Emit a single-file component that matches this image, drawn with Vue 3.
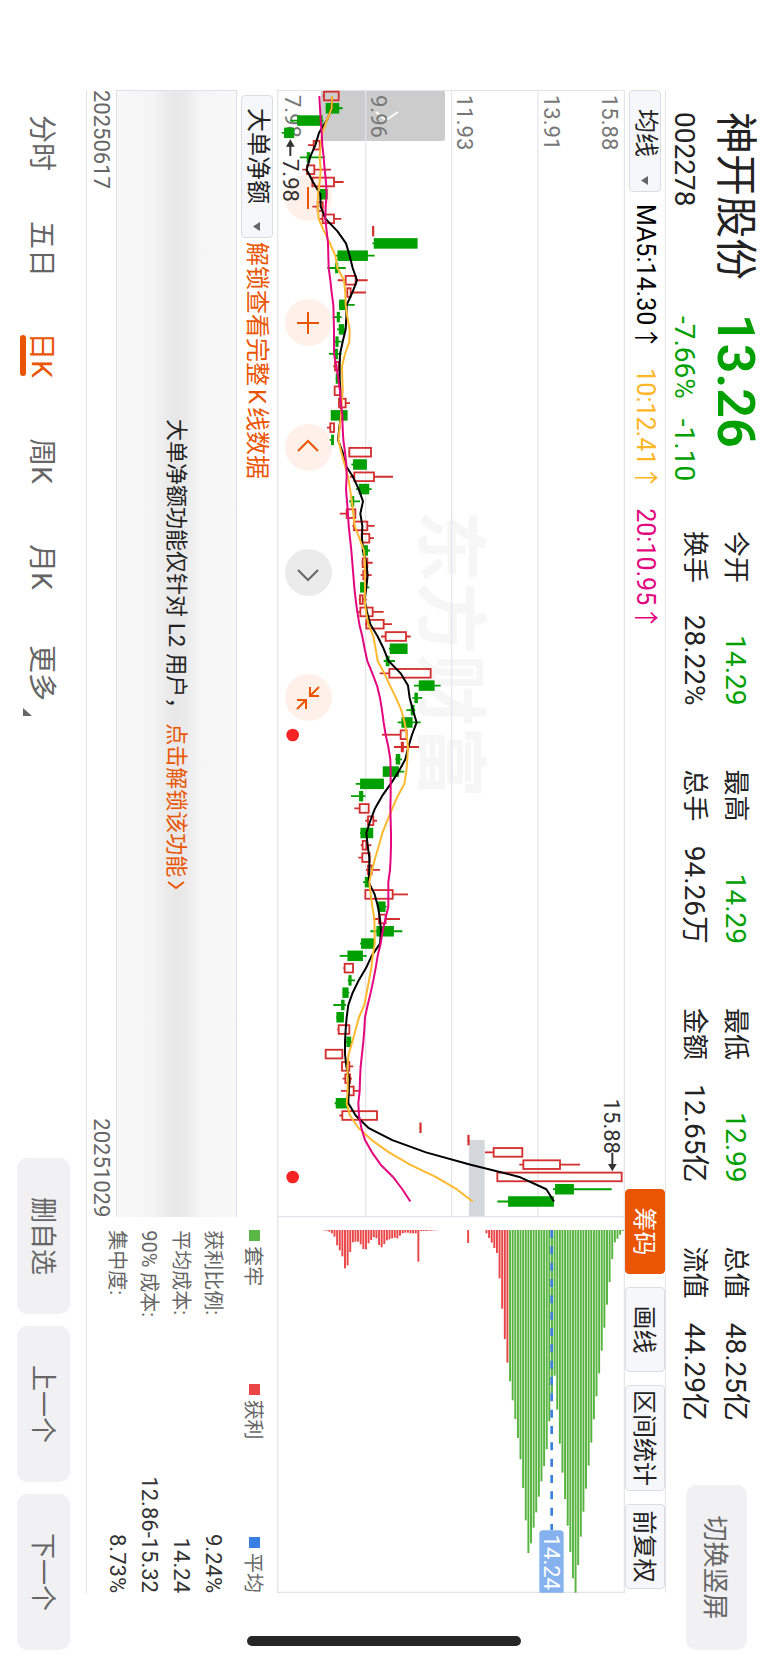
<script setup>
import { ref } from 'vue'

// Prices are kept in chart units (three per pixel) measured upwards from the plot origin.
const ORIGIN = 1185
const STEP = 36.85
const FIRST = 18
const y = (level) => ORIGIN - level
const x = (index) => FIRST + STEP * index

// [direction, low, high, body low, body high]
const candles = [
  ['r', 278, 328, 282, 326], ['g', 287, 338, 290, 325], ['g', 180, 280, 204, 275], ['g', 155, 190, 165, 190],
  ['r', 234, 270, 251, 269], ['g', 210, 285, 233, 238], ['r', 217, 303, 231, 253], ['r', 247, 341, 247, 312],
  ['g', 272, 290, 272, 290], ['r', 247, 280, 263, 278], ['r', 268, 334, 278, 312], ['r', 427, 432, 429, 430],
  ['g', 427, 560, 434, 560], ['g', 316, 434, 325, 411], ['g', 292, 347, 318, 322], ['r', 323, 413, 347, 377],
  ['r', 350, 408, 352, 362], ['g', 327, 374, 330, 345], ['g', 308, 335, 323, 327], ['g', 321, 347, 329, 340],
  ['g', 313, 335, 319, 323], ['g', 297, 335, 317, 321], ['r', 310, 328, 315, 326], ['g', 317, 330, 320, 323],
  ['r', 312, 333, 314, 331], ['r', 324, 360, 327, 347], ['g', 303, 351, 305, 350], ['r', 291, 314, 301, 312],
  ['g', 299, 312, 306, 309], ['r', 356, 424, 358, 423], ['g', 364, 408, 372, 408], ['r', 360, 489, 373, 432],
  ['g', 378, 425, 389, 415], ['g', 357, 390, 365, 370], ['r', 329, 377, 350, 376], ['r', 367, 434, 372, 412],
  ['r', 393, 432, 395, 418], ['g', 395, 420, 400, 411], ['r', 395, 428, 398, 412], ['r', 392, 425, 400, 410],
  ['g', 390, 418, 393, 403], ['r', 386, 410, 390, 398], ['r', 380, 461, 391, 428], ['r', 405, 486, 409, 461],
  ['r', 453, 542, 467, 528], ['g', 477, 530, 482, 530], ['g', 461, 495, 470, 476], ['r', 449, 603, 478, 602],
  ['g', 552, 632, 569, 611], ['g', 547, 577, 556, 561], ['g', 529, 556, 545, 551], ['g', 503, 572, 517, 545],
  ['r', 456, 530, 512, 530], ['r', 492, 567, 515, 519], ['g', 496, 516, 500, 508], ['g', 459, 523, 461, 504],
  ['g', 377, 461, 393, 459], ['g', 363, 406, 390, 397], ['r', 373, 417, 389, 416], ['r', 406, 441, 414, 430],
  ['g', 390, 428, 394, 427], ['r', 392, 424, 398, 409], ['r', 385, 420, 397, 419], ['r', 408, 450, 414, 425],
  ['g', 399, 420, 407, 416], ['r', 406, 534, 406, 488], ['g', 440, 470, 446, 464], ['r', 430, 510, 447, 467],
  ['g', 421, 517, 442, 489], ['g', 390, 430, 396, 430], ['g', 329, 410, 355, 396], ['r', 340, 370, 344, 369],
  ['g', 353, 375, 358, 362], ['g', 338, 358, 340, 353], ['g', 310, 348, 336, 341], ['g', 319, 342, 322, 339],
  ['r', 322, 359, 326, 358], ['g', 348, 369, 352, 361], ['r', 286, 338, 287, 337], ['r', 334, 370, 336, 358],
  ['r', 338, 366, 346, 360], ['r', 333, 388, 357, 371], ['g', 314, 355, 320, 352], ['r', 328, 442, 337, 441],
  ['r', 569, 574, 571, 572], ['r', 713, 718, 715, 716], ['r', 765, 877, 791, 877], ['r', 868, 1050, 880, 990],
  ['r', 802, 1176, 802, 1175], ['g', 969, 1145, 978, 1029], ['g', 802, 972, 837, 969],
]

const ma5 = [306, 305, 290, 267, 256, 240, 230, 249, 271, 272, 287, 322, 348, 359, 368, 381, 367, 350, 349, 347, 338, 330, 329, 329, 331, 333, 333, 328, 324, 338, 345, 369, 386, 399, 391, 397, 396, 399, 409, 413, 409, 404, 411, 421, 443, 461, 476, 512, 534, 539, 549, 560, 546, 535, 526, 506, 482, 456, 435, 421, 409, 413, 418, 418, 416, 434, 444, 450, 453, 450, 425, 408, 386, 368, 355, 350, 347, 345, 345, 349, 358, 356, 355, 377, 415, 487, 588, 722, 868, 949, 972]
const ma10 = [306, 305, 290, 277, 272, 269, 272, 269, 264, 263, 266, 282, 300, 316, 322, 342, 346, 347, 352, 359, 358, 345, 336, 337, 338, 335, 333, 329, 325, 334, 344, 354, 360, 366, 370, 374, 388, 402, 405, 404, 405, 404, 408, 415, 430, 437, 443, 463, 480, 498, 514, 524, 530, 534, 532, 529, 523, 503, 487, 472, 457, 447, 436, 426, 418, 422, 427, 433, 434, 434, 428, 424, 417, 410, 403, 387, 377, 367, 356, 352, 353, 353, 350, 360, 385, 425, 477, 540, 617, 680, 728]
const ma20 = [268, 270, 272, 275, 277, 281, 284, 288, 290, 287, 286, 290, 294, 295, 296, 301, 305, 310, 311, 312, 312, 312, 319, 325, 330, 333, 337, 338, 340, 345, 349, 350, 348, 351, 354, 356, 360, 364, 367, 370, 373, 377, 382, 388, 397, 404, 412, 427, 441, 450, 456, 461, 467, 475, 481, 482, 482, 482, 481, 482, 483, 483, 482, 480, 475, 475, 475, 466, 458, 452, 443, 437, 430, 422, 413, 405, 403, 400, 396, 392, 390, 389, 385, 387, 394, 405, 426, 452, 489, 517, 541]
const line = (levels) => levels.map((level, i) => `${x(i).toFixed(1)},${y(level)}`).join(' ')

// Chip distribution, from the lowest price upwards; bars from index 71 on are above the close.
const chips = [
  1, 2, 5, 10, 20, 46, 61, 79, 115, 106, 66, 37, 35, 35, 43, 57, 58, 40, 30, 21, 25, 45, 52, 42, 31, 28, 25, 23, 25, 17, 10, 8, 8, 10, 10, 10, 95, 3, 3, 3, 2, 2, 1, 1,
  0, 0, 0, 0, 0, 0, 0, 0, 0, 0, 0, 39, 0, 0, 0, 0, 0, 0,
  10, 24, 38, 54, 69, 145, 236, 327, 398,
  454, 511, 567, 624, 688, 774, 871, 969, 940, 893, 847, 800, 754, 708, 658, 574, 490, 437, 539, 641, 728, 807, 887, 966, 1045, 1088, 1005, 920, 845, 776, 707, 638, 568, 499, 430, 362, 293, 224, 156, 87, 37, 26, 14, 3,
]

const quotes = [
  ['今开', '14.29', true, '换手', '28.22%'],
  ['最高', '14.29', true, '总手', '94.26万'],
  ['最低', '12.99', true, '金额', '12.65亿'],
  ['总值', '48.25亿', false, '流值', '44.29亿'],
]
const tools = ['筹码', '画线', '区间统计', '前复权']
const activeTool = ref('筹码')
const tabs = ['分时', '五日', '日K', '周K', '月K', '更多']
const activeTab = ref('日K')
const actions = ['删自选', '上一个', '下一个']
const costs = [
  ['获利比例:', '9.24%'],
  ['平均成本:', '14.24'],
  ['90% 成本:', '12.86-15.32'],
  ['集中度:', '8.73%'],
]
const controls = [
  { name: '缩小', path: 'M1 12H23' },
  { name: '放大', path: 'M1 12H23M12 1V23' },
  { name: '向前', path: 'M15 2L5 12L15 22' },
  { name: '向后', path: 'M9 2L19 12L9 22', muted: true },
  { name: '收起', path: 'M1 1L10 10M1 10H10V1M23 23L14 14M14 23V14H23' },
]
</script>

<template>
  <div class="stage">
    <div class="screen">
      <header class="head">
        <div class="stock">
          <h1 class="name">神开股份</h1>
          <strong class="price">13.26</strong>
          <span class="code">002278</span>
          <span class="change"><span>-7.66%</span><span>-1.10</span></span>
        </div>
        <dl class="quotes">
          <div v-for="q in quotes" :key="q[0]" class="quote">
            <dt>{{ q[0] }}</dt>
            <dd :class="{ down: q[2] }">{{ q[1] }}</dd>
            <dt>{{ q[3] }}</dt>
            <dd>{{ q[4] }}</dd>
          </div>
        </dl>
        <button class="soft rotate" type="button">切换竖屏</button>
      </header>

      <div class="content">
        <div class="toolbar">
          <label class="picker main-picker">
            <select aria-label="主图指标"><option>均线</option></select>
            <svg class="caret" viewBox="0 0 9 7"><path d="M0 0H9L4.5 7Z" /></svg>
          </label>
          <div class="averages">
            <span class="avg">MA5:14.30<i>↑</i></span>
            <span class="avg amber">10:12.41<i>↑</i></span>
            <span class="avg pink">20:10.95<i>↑</i></span>
          </div>
          <div class="tools">
            <button
              v-for="t in tools" :key="t" type="button" class="tool"
              :class="{ on: t === activeTool }" @click="activeTool = t"
            >{{ t }}</button>
          </div>
        </div>

        <div class="plot">
          <button class="handle" type="button" aria-label="展开">
            <svg viewBox="0 0 10 24"><path d="M1 1L9 13L1 23" /></svg>
          </button>
          <div class="controls">
            <button
              v-for="c in controls" :key="c.name" type="button" class="round"
              :class="{ muted: c.muted }" :aria-label="c.name"
            >
              <svg viewBox="0 0 24 24"><path :d="c.path" /></svg>
            </button>
          </div>
          <svg class="chart" viewBox="0 0 4509 1044">
            <text class="mark" x="1260" y="600">东方财富</text>
            <rect class="gap" x="3150" y="421" width="228" height="47" />
            <g class="grid">
              <path d="M0 261H3380M0 520H3380M0 778H3380" />
              <path d="M0 2H4507M1.5 0V1044M3380 0V1044M4507 0V1044M0 1042H4507" />
            </g>
            <g class="axis">
              <text x="15" y="68">15.88</text>
              <text x="15" y="242">13.91</text>
              <text x="15" y="503">11.93</text>
              <text x="15" y="763">9.96</text>
              <text x="15" y="1021">7.98</text>
            </g>
            <g v-for="(c, i) in candles" :key="i" :class="c[0] === 'r' ? 'up' : 'fall'">
              <path :d="`M${x(i)} ${y(c[1])}V${y(c[3])}M${x(i)} ${y(c[4])}V${y(c[2])}`" />
              <rect :x="x(i) - 13" :y="y(c[4])" width="26" :height="c[4] - c[3]" />
            </g>
            <polyline class="ma" :points="line(ma5)" />
            <polyline class="ma amber-line" :points="line(ma10)" />
            <polyline class="ma pink-line" :points="line(ma20)" />
            <g class="note">
              <text x="207" y="1027">7.98</text>
              <path d="M165 1004H198" />
              <path class="tip" d="M148 1004L170 991V1017Z" />
              <text x="3026" y="62">15.88</text>
              <path d="M3188 38H3228" />
              <path class="tip" d="M3244 38L3222 25V51Z" />
            </g>
            <circle class="dot" cx="1935" cy="997" r="19" />
            <circle class="dot" cx="3261" cy="997" r="19" />
            <rect
              v-for="(n, i) in chips" :key="'chip' + i"
              :class="i < 71 ? 'gain' : 'loss'"
              x="3420" :y="900 - 7.86 * i" :width="n" height="5.8"
            />
            <path class="mean" d="M3420 220H4320" />
            <path class="tag" d="M4321 195Q4321 184 4332 184H4508V257H4332Q4321 257 4321 246Z" />
            <text class="tag-text" x="4334" y="244">14.24</text>
          </svg>
        </div>

        <div class="lower">
          <div class="orders">
            <div class="order-bar">
              <label class="picker order-picker">
                <select aria-label="副图指标"><option>大单净额</option></select>
                <svg class="caret" viewBox="0 0 9 7"><path d="M0 0H9L4.5 7Z" /></svg>
              </label>
              <a class="unlock" href="#">解锁查看完整<span class="latin">K</span>线数据</a>
            </div>
            <p class="locked">
              大单净额功能仅针对<span class="level">L2</span>用户，<a href="#">点击解锁该功能<svg viewBox="0 0 8 18"><path d="M1 1L7 9L1 17" /></svg></a>
            </p>
            <div class="dates"><time>20250617</time><time>20251029</time></div>
          </div>
          <div class="cost">
            <ul class="legend">
              <li><b class="sq loss-sq"></b>套牢</li>
              <li><b class="sq gain-sq"></b>获利</li>
              <li><b class="sq mean-sq"></b>平均</li>
            </ul>
            <dl class="figures">
              <div v-for="c in costs" :key="c[0]"><dt>{{ c[0] }}</dt><dd>{{ c[1] }}</dd></div>
            </dl>
          </div>
        </div>
      </div>

      <footer class="foot">
        <nav class="tabs">
          <button
            v-for="t in tabs" :key="t" type="button" class="tab"
            :class="{ on: t === activeTab }" @click="activeTab = t"
          >{{ t }}<svg v-if="t === '更多'" class="corner" viewBox="0 0 8 9"><path d="M8 0V9H0Z" /></svg></button>
        </nav>
        <div class="actions">
          <button v-for="a in actions" :key="a" type="button" class="soft action">{{ a }}</button>
        </div>
      </footer>
      <div class="home"></div>
    </div>
  </div>
</template>

<style>
body {
  margin: 0;
  background: #fff;
}
</style>

<style scoped>
.stage {
  position: relative;
  height: 100vh;
  overflow: hidden;
  background: #fff;
}
/* Landscape view on a portrait display */
.screen {
  position: absolute;
  top: 0;
  left: 100%;
  width: 100vh;
  height: 100vw;
  display: flex;
  flex-direction: column;
  transform: rotate(90deg);
  transform-origin: 0 0;
  font-family: Roboto, "Noto Sans CJK SC", sans-serif;
  color: #222;
}
button,
select {
  font-family: inherit;
  border: 0;
  padding: 0;
  margin: 0;
  background: none;
  color: inherit;
}
a {
  text-decoration: none;
}
dl,
dt,
dd,
h1,
p,
ul {
  margin: 0;
  padding: 0;
}
svg {
  display: block;
}

.head {
  height: 102px;
  display: flex;
  align-items: flex-start;
  padding: 0 13px 0 112px;
}
.stock {
  width: 419px;
  display: grid;
  grid-template-columns: 202px 1fr;
  grid-template-rows: 66px 36px;
  align-items: center;
}
.name {
  font-size: 42px;
  font-weight: 400;
  line-height: 60px;
}
.price {
  font-size: 52px;
  font-weight: 600;
  line-height: 60px;
  color: #00a000;
}
.code,
.change {
  font-size: 28px;
  line-height: 36px;
}
.change {
  display: flex;
  gap: 20px;
  color: #00a000;
  padding-left: 2px;
}
.quotes {
  flex: 1;
  display: grid;
  grid-template-columns: repeat(4, 1fr);
  gap: 64px;
  padding-top: 12px;
  margin-right: 64px;
}
.quote {
  display: grid;
  grid-template-columns: auto 1fr;
  grid-auto-rows: 41px;
  line-height: 41px;
}
.quote dt {
  font-size: 26px;
}
.quote dd {
  font-size: 28px;
  text-align: right;
  white-space: nowrap;
}
.quote .down {
  color: #00a000;
}
.soft {
  background: #f1f1f3;
  border-radius: 10px;
  color: #666;
  font-size: 26px;
  padding-bottom: 3px;
}
.rotate {
  width: 165px;
  height: 61px;
  margin-top: 21px;
}

.content {
  margin: 0 70px 0 90px;
}
.toolbar {
  height: 41px;
  box-sizing: border-box;
  border-top: 1px solid #e4e5ea;
  display: flex;
  align-items: center;
}
.picker {
  position: relative;
  box-sizing: border-box;
  height: 32px;
  border: 1px solid #dcdde2;
  border-radius: 4px;
  background: #f6f7fa;
}
.picker select {
  appearance: none;
  display: block;
  width: 100%;
  height: 30px;
  font-size: 24px;
  line-height: 28px;
  padding-bottom: 2px;
}
.main-picker {
  width: 102px;
}
.main-picker select {
  padding-left: 18px;
}
.order-picker {
  width: 143px;
}
.order-picker select {
  padding-left: 12px;
}
.caret {
  position: absolute;
  right: 6px;
  top: 12px;
  width: 9px;
  height: 7px;
  fill: #666;
  pointer-events: none;
}
.averages {
  flex: 1;
  display: flex;
  gap: 18px;
  padding: 0 0 4px 12px;
  font-size: 25px;
  line-height: 32px;
  color: #000;
}
.avg i {
  font-style: normal;
  font-family: "Noto Sans CJK SC", sans-serif;
}
.amber {
  color: #ffb627;
}
.pink {
  color: #e3067f;
}
.tools {
  display: flex;
  gap: 13px;
  padding-right: 4px;
}
.tool {
  box-sizing: border-box;
  min-width: 85px;
  height: 40px;
  padding: 0 4px 5px;
  border: 1px solid #dcdde2;
  border-radius: 4px;
  background: #f6f7fa;
  font-size: 24px;
}
.tool.on {
  background: #ea5504;
  border-color: #ea5504;
  color: #fff;
}

.plot {
  position: relative;
}
.chart {
  position: relative;
  width: 100%;
  height: auto;
  pointer-events: none;
}
.handle {
  position: absolute;
  left: 0;
  top: 180px;
  width: 51px;
  height: 124px;
  background: #ccc;
  border-radius: 3px 3px 0 0;
}
.handle svg {
  width: 10px;
  height: 24px;
  margin: -8px 0 0 21px;
  fill: none;
  stroke: #fff;
  stroke-width: 2;
}
.controls {
  position: absolute;
  left: 84px;
  bottom: 8px;
  display: flex;
  gap: 78px;
}
.round {
  width: 47px;
  height: 47px;
  border-radius: 50%;
  background: #fff1ea;
  display: flex;
  align-items: center;
  justify-content: center;
}
.round svg {
  width: 24px;
  height: 24px;
  fill: none;
  stroke: #ea5504;
  stroke-width: 2;
}
.round.muted {
  background: #ebebeb;
}
.round.muted svg {
  stroke: #666;
}
.mark {
  font-size: 216px;
  font-weight: 700;
  fill: #f6f6f6;
}
.gap {
  fill: #d4d8dd;
}
.grid path {
  fill: none;
  stroke: #e2e4ea;
  stroke-width: 3.5;
}
.axis text {
  font-size: 66px;
  fill: #777;
}
.up path,
.up rect {
  fill: none;
  stroke: #d2302f;
  stroke-width: 5.5;
}
.fall path,
.fall rect {
  fill: #00a000;
  stroke: #00a000;
  stroke-width: 5.5;
}
.ma {
  fill: none;
  stroke: #000;
  stroke-width: 6;
  stroke-linejoin: round;
}
.amber-line {
  stroke: #ffb930;
}
.pink-line {
  stroke: #e3067f;
}
.note text {
  font-size: 66px;
  fill: #333;
}
.note path {
  stroke: #333;
  stroke-width: 6;
}
.note .tip {
  fill: #333;
  stroke: none;
}
.dot {
  fill: #f52323;
}
.gain {
  fill: #ea4648;
}
.loss {
  fill: #56b43f;
}
.mean {
  stroke: #3a80dc;
  stroke-width: 8;
  stroke-dasharray: 24 25;
}
.tag {
  fill: #85b2ef;
}
.tag-text {
  font-size: 66px;
  fill: #fff;
}

.lower {
  display: grid;
  grid-template-columns: 3fr 1fr;
  border-bottom: 1px solid #e0e1e5;
}
.order-bar {
  height: 40px;
  display: flex;
  align-items: center;
  gap: 4px;
  padding-left: 5px;
}
.unlock {
  color: #ea5504;
  font-size: 24px;
  line-height: 32px;
}
.latin {
  margin: 0 3px;
}
.locked {
  box-sizing: border-box;
  height: 121px;
  display: flex;
  align-items: center;
  justify-content: center;
  border: 1px solid #dfe1e6;
  border-right: 0;
  background: linear-gradient(#f8f8f8, #f5f5f5 30%, #ebebeb 42%, #e7e7e7 50%, #ebebeb 58%, #f4f4f4 70%, #f8f8f8);
  font-size: 22px;
  line-height: 32px;
}
.level {
  margin: 0 6px;
}
.locked a {
  display: flex;
  align-items: center;
  margin-left: 4px;
  color: #ea5504;
}
.locked a svg {
  width: 8px;
  height: 18px;
  margin-left: 4px;
  fill: none;
  stroke: #ea5504;
  stroke-width: 2;
}
.dates {
  height: 29px;
  display: flex;
  justify-content: space-between;
  align-items: center;
  font-size: 22px;
  color: #666;
}
.cost {
  padding-left: 13px;
}
.legend {
  height: 44px;
  display: grid;
  grid-template-columns: 2fr 2fr auto;
  align-items: center;
  margin-bottom: 4px;
  list-style: none;
  font-size: 20px;
  color: #666;
}
.legend li {
  display: flex;
  align-items: center;
  gap: 5px;
}
.sq {
  width: 11px;
  height: 11px;
}
.loss-sq {
  background: #5ab744;
}
.gain-sq {
  background: #ea4648;
}
.mean-sq {
  background: #3a80e4;
}
.figures div {
  display: flex;
  justify-content: space-between;
  height: 32px;
  line-height: 32px;
}
.figures dt {
  font-size: 20px;
  color: #666;
}
.figures dd {
  font-size: 22px;
  color: #333;
}

.foot {
  flex: 1;
  display: flex;
  align-items: center;
  justify-content: space-between;
  padding: 0 13px 2px 90px;
}
.tabs {
  display: grid;
  grid-template-columns: repeat(6, 106px);
}
.tab {
  position: relative;
  height: 53px;
  font-size: 28px;
  color: #666;
}
.tab.on {
  color: #ea5504;
}
.tab.on::after {
  content: "";
  position: absolute;
  left: 50%;
  bottom: 3px;
  width: 41px;
  height: 6px;
  margin-left: -20px;
  border-radius: 3px;
  background: #ea5504;
}
.corner {
  position: absolute;
  right: 10px;
  bottom: 6px;
  width: 8px;
  height: 9px;
  fill: #666;
}
.actions {
  display: flex;
  gap: 12px;
}
.action {
  width: 156px;
  height: 53px;
}
.home {
  position: absolute;
  right: 17px;
  top: 50%;
  width: 10px;
  height: 274px;
  margin-top: -137px;
  border-radius: 5px;
  background: #262626;
}
</style>
